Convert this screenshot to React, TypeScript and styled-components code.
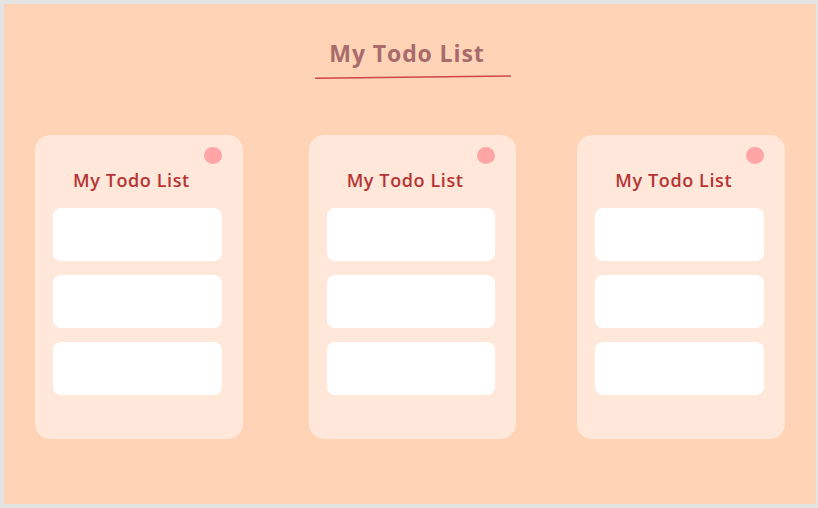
import React from "react";
import styled, { createGlobalStyle } from "styled-components";

const Global = createGlobalStyle`
  html, body { margin: 0; padding: 0; background: #e4e4e4; }
  body { font-family: "Open Sans", "Liberation Sans", sans-serif; }
`;

const Frame = styled.div`
  width: 818px;
  height: 508px;
  box-sizing: border-box;
  padding: 4px 2px 4px 4px;
  background: #e4e4e4;
`;

const Board = styled.main`
  height: 100%;
  background: #ffd3b6;
  display: flex;
  flex-direction: column;
  align-items: center;
`;

const Header = styled.header`
  margin-top: 34px;
  display: flex;
  flex-direction: column;
  align-items: center;
`;

const Title = styled.h1`
  margin: 0 6px 0 0;
  font-family: "Open Sans", sans-serif;
  font-weight: 700;
  font-size: 23px;
  line-height: 30px;
  color: #a86b6b;
  letter-spacing: 0.9px;
`;

const Underline = styled.svg`
  display: block;
  margin-top: 7px;
  margin-left: 5px;
`;

const Columns = styled.section`
  align-self: stretch;
  margin-top: 56px;
  padding: 0 31px;
  display: flex;
`;

const Card = styled.article<{ $offset: number }>`
  position: relative;
  width: 208px;
  height: 304px;
  margin-left: ${(p) => p.$offset}px;
  box-sizing: border-box;
  background: #ffe7d9;
  border-radius: 15px;
  padding: 29px 21px 0 18px;
  display: flex;
  flex-direction: column;
`;

const Dot = styled.span`
  position: absolute;
  top: 12px;
  right: 21px;
  width: 18px;
  height: 17px;
  border-radius: 50%;
  background: #ffa5a5;
`;

const CardTitle = styled.h2`
  margin: 0 0 0 20px;
  font-family: "Open Sans", sans-serif;
  font-weight: 600;
  font-size: 18px;
  line-height: 32px;
  letter-spacing: 0.6px;
  color: #b63434;
`;

const Items = styled.ul`
  list-style: none;
  margin: 12px 0 0;
  padding: 0;
  display: flex;
  flex-direction: column;
  gap: 14px;
`;

const Item = styled.li`
  height: 53px;
  background: #ffffff;
  border-radius: 8px;
`;

const cards = [{ offset: 0 }, { offset: 66 }, { offset: 61 }];

export default function App() {
  return (
    <>
      <Global />
      <Frame>
        <Board>
          <Header>
            <Title>My Todo List</Title>
            <Underline width="196" height="4" viewBox="0 0 196 4">
              <path d="M0.5 3.2 Q 98 2.4 195.5 1" stroke="#d04545" strokeWidth="1.4" fill="none" strokeLinecap="round" />
            </Underline>
          </Header>
          <Columns>
            {cards.map((c, i) => (
              <Card key={i} $offset={c.offset}>
                <Dot />
                <CardTitle>My Todo List</CardTitle>
                <Items>
                  <Item />
                  <Item />
                  <Item />
                </Items>
              </Card>
            ))}
          </Columns>
        </Board>
      </Frame>
    </>
  );
}
